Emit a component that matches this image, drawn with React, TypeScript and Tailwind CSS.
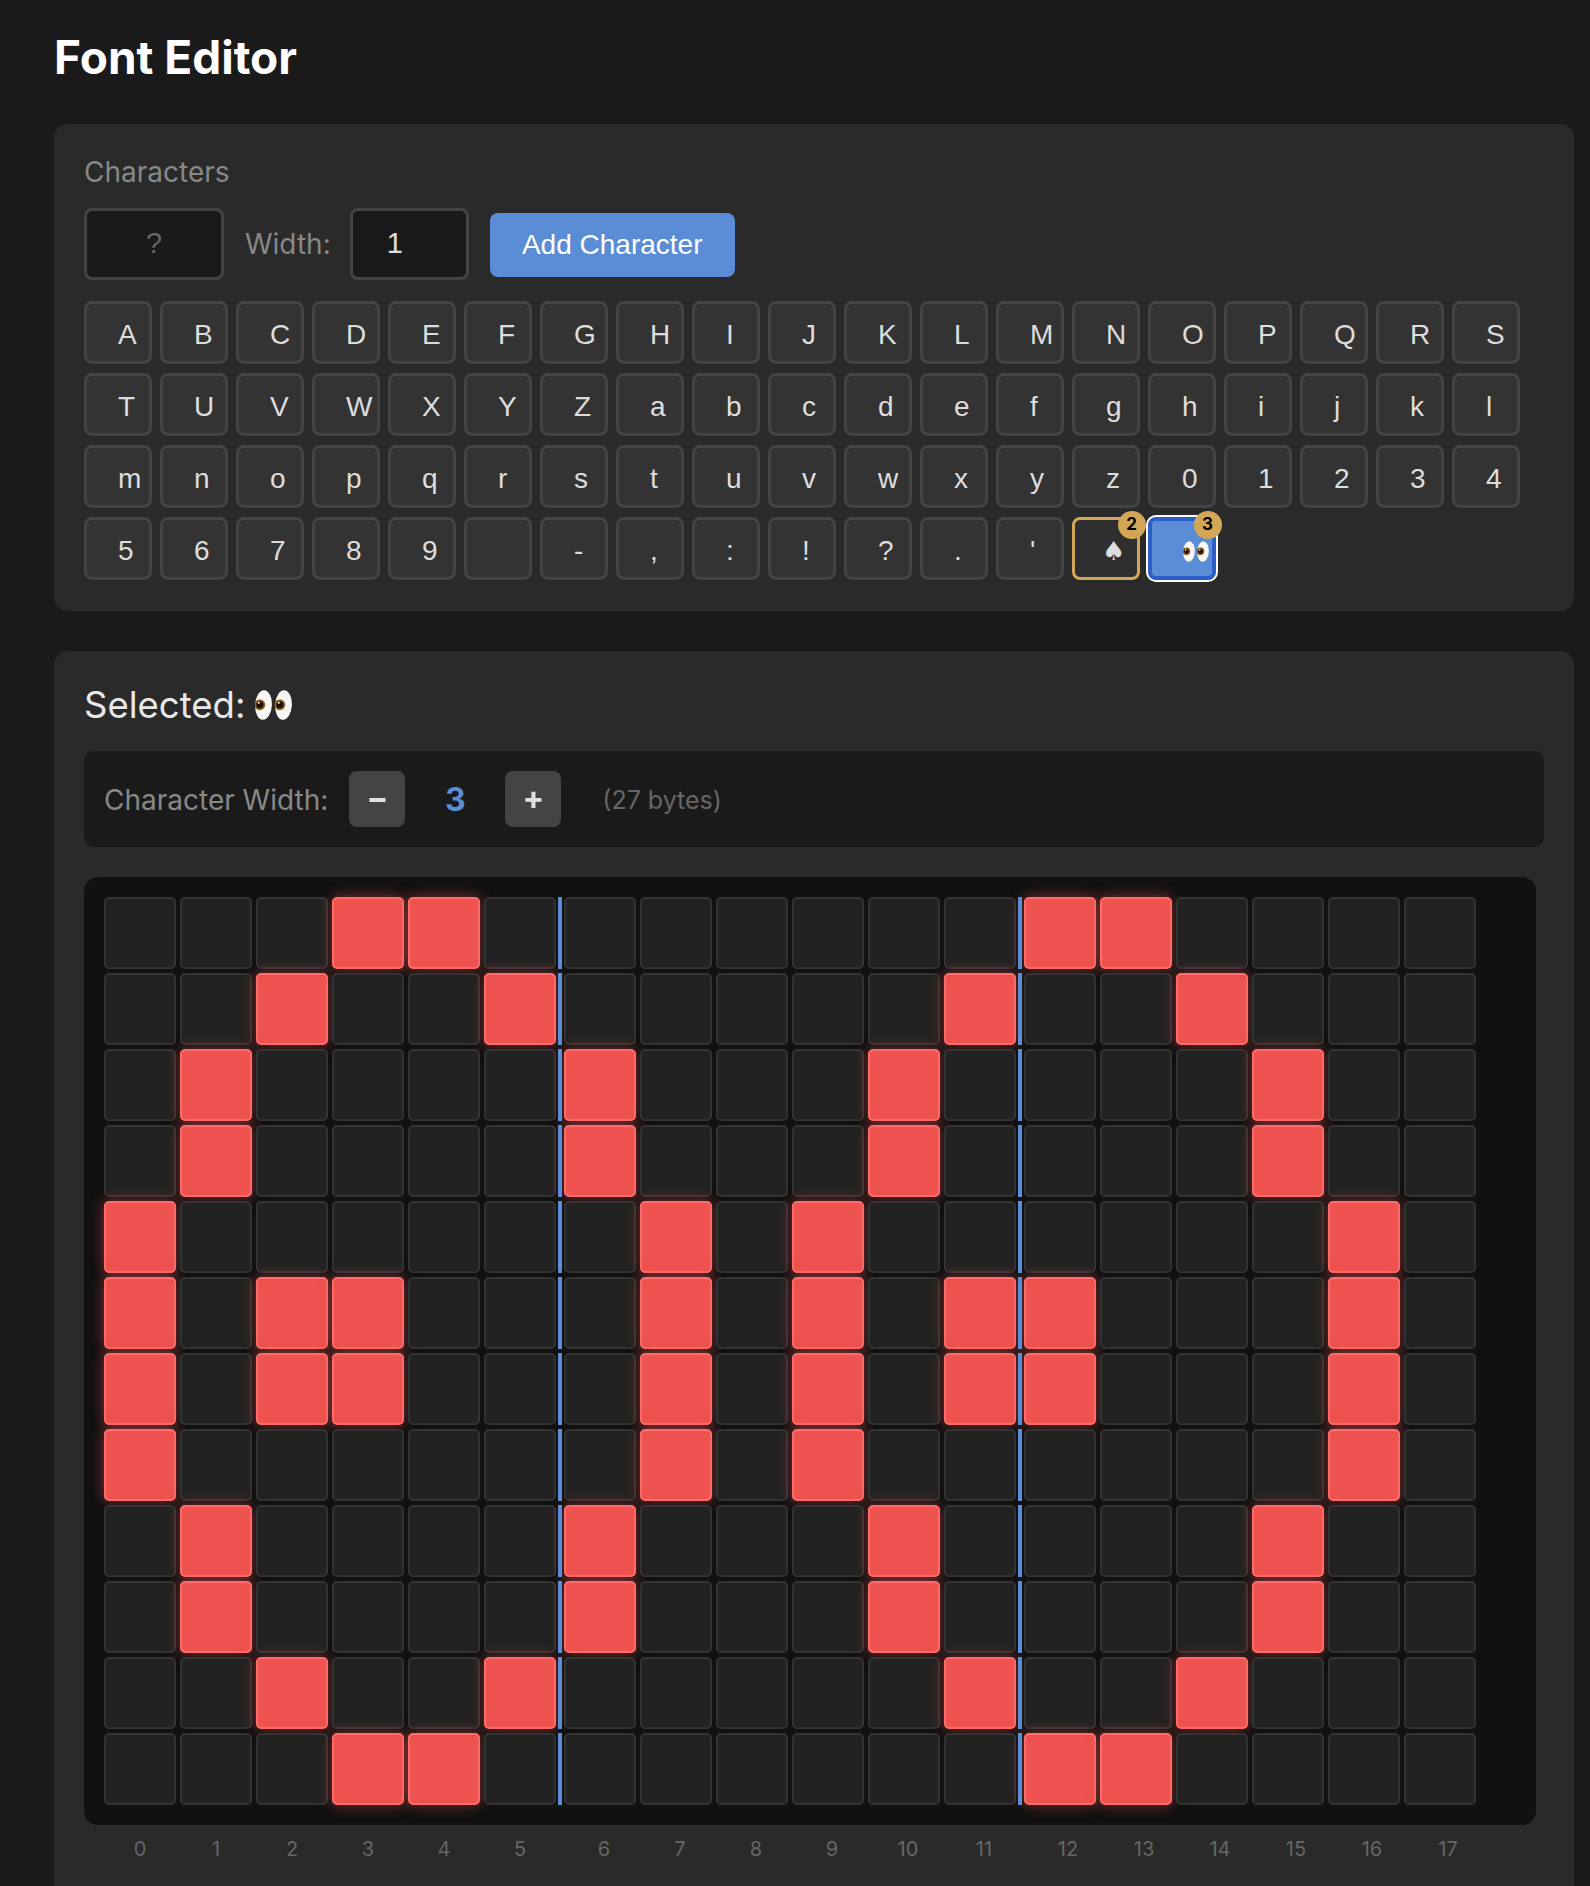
import React from 'react';

const keyChars = [
  'A','B','C','D','E','F','G','H','I','J','K','L','M','N','O','P','Q','R','S',
  'T','U','V','W','X','Y','Z','a','b','c','d','e','f','g','h','i','j','k','l',
  'm','n','o','p','q','r','s','t','u','v','w','x','y','z','0','1','2','3','4',
  '5','6','7','8','9',' ','-',',',':','!','?','.',"'",
];

const rowA = [3, 4, 12, 13];
const rowB = [2, 5, 11, 14];
const rowC = [1, 6, 10, 15];
const rowD = [0, 7, 9, 16];
const rowE = [0, 2, 3, 7, 9, 11, 12, 16];
const pixels = [rowA, rowB, rowC, rowC, rowD, rowE, rowE, rowD, rowC, rowC, rowB, rowA];

const columns = Array.from({ length: 18 }, (_, i) => i);

// no emoji font in the sandbox, so the eyes are drawn
const Eye: React.FC<{ cx: number }> = ({ cx }) => (
  <g transform={`rotate(3 ${cx} 15)`}>
    <ellipse cx={cx} cy="15" rx="8.4" ry="14.8" fill="#f6f6f4" />
    <circle cx={cx - 3.6} cy="15" r="5.4" fill="#8f5f1c" />
    <circle cx={cx - 3.6} cy="15" r="3.5" fill="#1d0f05" />
    <circle cx={cx - 4.8} cy="13" r="1.1" fill="#ffffff" />
  </g>
);

const Eyes: React.FC<{ className: string }> = ({ className }) => (
  <svg viewBox="0 0 37 30" className={className} role="img" aria-label="👀">
    <Eye cx={8.5} />
    <Eye cx={28.5} />
  </svg>
);

const Badge: React.FC<{ n: number; className: string }> = ({ n, className }) => (
  <span className={`absolute flex h-[28px] w-[28px] items-center justify-center rounded-full bg-[#d4a657] font-['Inter'] text-[17px] font-bold text-black ${className}`}>
    {n}
  </span>
);

export default function App() {
  return (
    <div className="h-[1886px] overflow-hidden bg-[#1a1a1a] pl-[54px] pr-[16px] pt-[28px] font-['Inter',sans-serif]">
      <h1 className="mb-[38px] text-[46px] leading-[58px] font-bold text-white">Font Editor</h1>

      <div className="mb-[40px] rounded-[14px] bg-[#2a2a2a] px-[30px] pt-[30px] pb-[31px]">
        <div className="mb-[18px] text-[28px] leading-[36px] text-[#888888]">Characters</div>
        <div className="mb-[21px] flex h-[72px] items-center">
          <div className="flex h-[72px] w-[140px] items-center justify-center rounded-[8px] border-[3px] border-[#444444] bg-[#1a1a1a] font-['Liberation_Sans'] text-[29px] text-[#666666]">
            ?
          </div>
          <span className="ml-[21px] text-[28px] text-[#888888]">Width:</span>
          <div className="ml-[19px] flex h-[72px] w-[119px] items-center rounded-[8px] border-[3px] border-[#444444] bg-[#1a1a1a] pl-[34px] font-['Liberation_Sans'] text-[29px] text-[#e0e0e0]">
            1
          </div>
          <button className="mt-[2px] ml-[21px] h-[64px] w-[245px] rounded-[8px] bg-[#5b8dd6] font-['Liberation_Sans'] text-[28px] text-white">
            Add Character
          </button>
        </div>

        <div className="grid grid-cols-[repeat(19,67.5px)] gap-x-[8.5px] gap-y-[9px]">
          {keyChars.map((c, i) => (
            <button
              key={i}
              className="h-[63px] rounded-[8px] border-[3px] border-[#444444] bg-[#333333] pt-[5px] pl-[31px] text-left font-['Liberation_Sans'] text-[28px] text-[#dddddd]"
            >
              {c}
            </button>
          ))}
          <button className="relative h-[63px] rounded-[8px] border-[3px] border-[#d4a657] bg-[#2f2f2f] pt-[6px] pl-[27px] text-left font-['DejaVu_Sans'] text-[26px] text-[#dddddd]">
            ♠
            <Badge n={2} className="-top-[9px] -right-[9px]" />
          </button>
          <button className="relative flex h-[63px] items-center rounded-[8px] border-[4px] border-[#2a5fc8] bg-[#5b8dd6] pt-[5px] pl-[31px] outline-2 outline-white">
            <Eyes className="h-[21px] w-[26px]" />
            <Badge n={3} className="-top-[10px] -right-[10px]" />
          </button>
        </div>
      </div>

      <div className="rounded-[14px] bg-[#2a2a2a] px-[30px] pt-[30px] pb-[40px]">
        <div className="mb-[22px] flex h-[48px] items-center text-[36.5px] text-[#e8e8e8]">
          Selected:
          <Eyes className="ml-[10px] h-[30px] w-[37px]" />
        </div>

        <div className="mb-[30px] flex h-[96px] items-center rounded-[10px] bg-[#1a1a1a] pl-[20px]">
          <span className="pt-[1px] text-[28px] text-[#888888]">Character Width:</span>
          <button className="ml-[21px] flex h-[56px] w-[56px] items-center justify-center rounded-[8px] bg-[#444444] pb-[3px] text-[32px] font-bold text-[#e0e0e0]">
            −
          </button>
          <span className="w-[100px] pt-[2px] text-center text-[32px] font-bold text-[#5b8dd6]">3</span>
          <button className="flex h-[56px] w-[56px] items-center justify-center rounded-[8px] bg-[#444444] pb-[3px] text-[32px] font-bold text-[#e0e0e0]">
            +
          </button>
          <span className="ml-[41px] pt-[3px] text-[25px] text-[#666666]">(27 bytes)</span>
        </div>

        <div className="flex w-[1452px] flex-col gap-[4px] rounded-[14px] bg-[#111111] p-[20px]">
          {pixels.map((row, r) => (
            <div key={r} className="flex gap-[4px]">
              {columns.map((c) => (
                <React.Fragment key={c}>
                  {row.includes(c) ? (
                    <div className="h-[72px] w-[72px] rounded-[5px] border-[2px] border-[#ff6b6b] bg-[#ee5350] shadow-[0_0_14px_rgba(239,83,80,0.5)]" />
                  ) : (
                    <div className="h-[72px] w-[72px] rounded-[5px] border-[2px] border-[#333333] bg-[#222222]" />
                  )}
                  {c % 6 === 5 && c < 17 && <div className="relative -mx-[2px] w-[4px] bg-[#5b8dd6]" />}
                </React.Fragment>
              ))}
            </div>
          ))}
        </div>

        <div className="mt-[11px] flex gap-[4px] pl-[20px] text-[20px] leading-[26px] text-[#666666]">
          {columns.map((c) => (
            <span key={c} className={c % 6 === 5 ? 'mr-[8px] w-[72px] text-center' : 'w-[72px] text-center'}>
              {c}
            </span>
          ))}
        </div>
      </div>
    </div>
  );
}
